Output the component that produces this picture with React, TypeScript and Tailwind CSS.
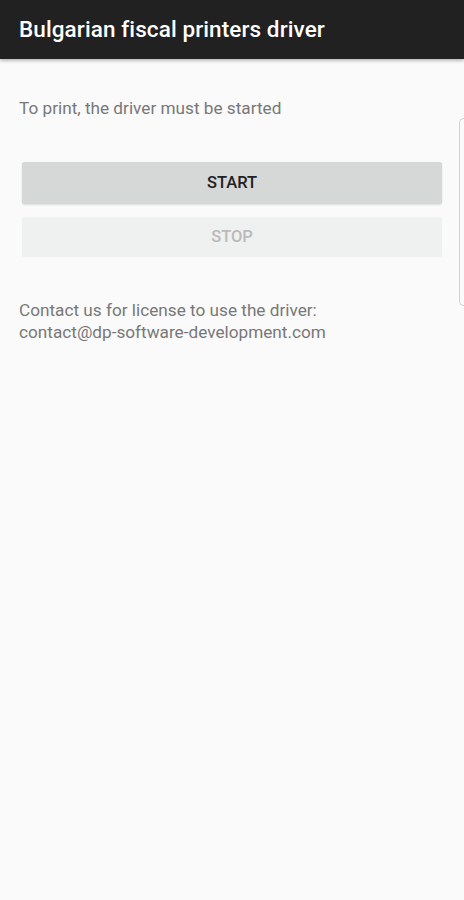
export default function App() {
  return (
    <div className="relative min-h-[900px] w-full bg-[#fafafa] font-['Roboto',sans-serif]">
      <header className="flex h-[59px] items-center bg-[#212121] px-[19px] shadow-[0_2px_3px_rgba(0,0,0,0.25)]">
        <h1 className="text-[22.5px] font-medium tracking-[0.1px] text-white">Bulgarian fiscal printers driver</h1>
      </header>

      <main className="px-[19px] pt-[38px]">
        <p className="text-[17.2px] leading-[23px] text-[#787878]">To print, the driver must be started</p>

        <div className="mt-[42px] flex flex-col gap-[13px] px-[3px]">
          <button
            type="button"
            className="h-[42px] w-full rounded-[2px] bg-[#d6d7d7] text-[16.5px] font-medium text-[#212121] shadow-[0_1px_2px_rgba(0,0,0,0.12)]"
          >
            START
          </button>
          <button
            type="button"
            className="h-[40px] w-full rounded-[2px] bg-[#eff0f0] text-[16.5px] font-medium text-[#bababa]"
          >
            STOP
          </button>
        </div>

        <p className="mt-[42px] text-[17.2px] leading-[22px] text-[#787878]">
          Contact us for license to use the driver:
          <br />
          contact@dp-software-development.com
        </p>
      </main>

      <div className="absolute right-0 top-[118px] h-[188px] w-[5px] rounded-l-[6px] border border-r-0 border-[#d0d0d0]" />
    </div>
  );
}
